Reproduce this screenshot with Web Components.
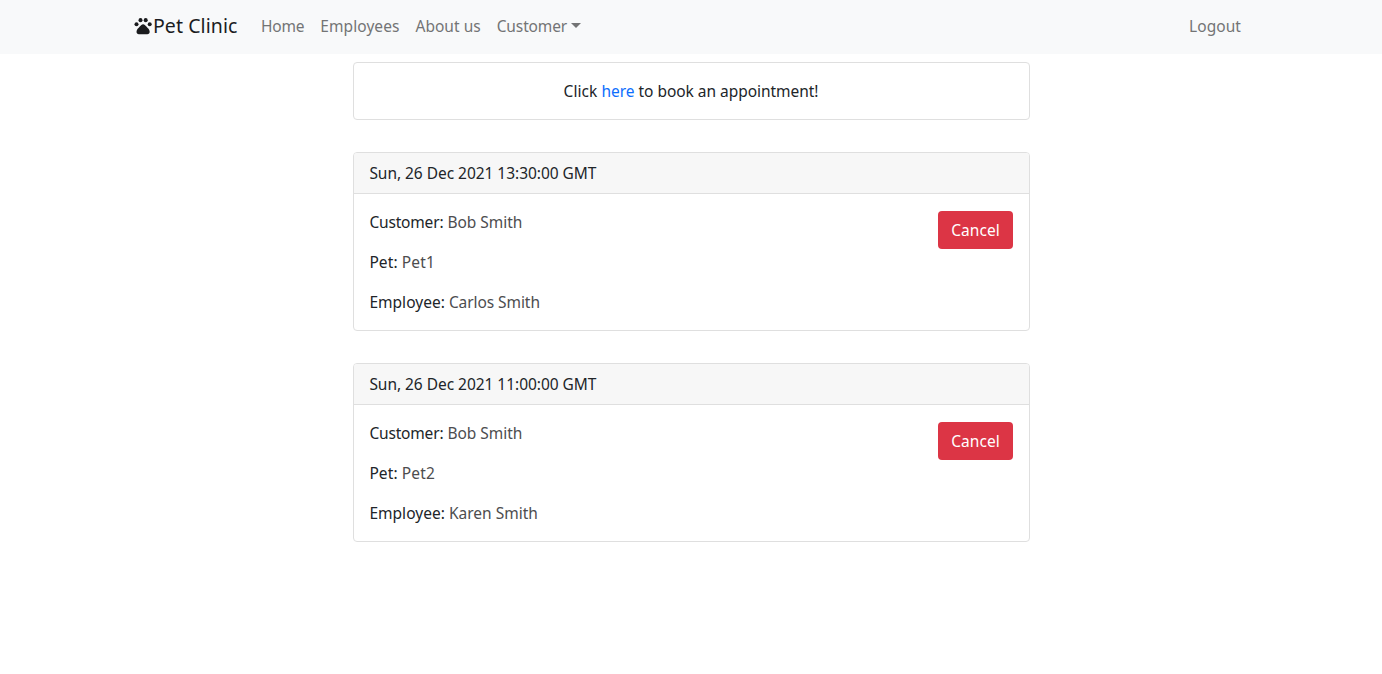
<!DOCTYPE html>
<html lang="en">
<head>
<meta charset="utf-8">
<title>Pet Clinic</title>
<style>
body{margin:0;background:#fff;color:#212529;font:15.5px/24px "Noto Sans","Open Sans",sans-serif}
</style>
</head>
<body>
<clinic-app></clinic-app>
<script>
const define = (name, html, setup) => customElements.define(name, class extends HTMLElement {
  connectedCallback() {
    if (this.shadowRoot) return;
    const t = document.createElement('template');
    t.innerHTML = html;
    this.attachShadow({mode: 'open'}).append(t.content.cloneNode(true));
    if (setup) setup(this, this.shadowRoot);
  }
});

// Text run whose tracking is adjusted to a given advance width.
define('fit-text', `<style>:host{display:inline-block;white-space:pre;vertical-align:baseline}span{display:inline-block}</style><span><slot></slot></span>`, (el, root) => {
  const span = root.querySelector('span');
  const want = parseFloat(el.getAttribute('w'));
  const n = el.textContent.length;
  const have = span.getBoundingClientRect().width;
  span.style.letterSpacing = ((want - have) / n) + 'px';
  el.style.width = want + 'px';
});

define('paw-icon', `<style>:host{display:block;width:20px;height:20px}svg{display:block}</style>
<svg width="20" height="20" viewBox="0 0 20 20" fill="#1b1c1e"><ellipse cx="3.500" cy="8.300" rx="2" ry="2"/><ellipse cx="7.500" cy="4.200" rx="2" ry="2.100"/><ellipse cx="12.700" cy="4.200" rx="2" ry="2.100"/><ellipse cx="16.700" cy="8.300" rx="2" ry="2"/><path d="M10.100 8.200c1.300 0 2.200 1 3.300 2.300 1.300 1.500 3.300 3.100 3.300 5.200 0 1.500-.9 2.500-2.400 2.500H5.900c-1.500 0-2.400-1-2.400-2.500 0-2.100 2-3.700 3.300-5.200C7.900 9.200 8.800 8.200 10.100 8.200z"/></svg>`);

define('nav-link', `<style>:host{display:flex;align-items:center;padding:0 8px;color:#737475}</style><slot></slot>`);

define('nav-caret', `<style>:host{display:block;margin:-1px 0 0 4px;border:5px solid transparent;border-top-color:#737475;border-bottom:0}</style>`);

define('nav-bar', `<style>
:host{display:block;background:#f8f9fa}
nav{box-sizing:border-box;height:54px;max-width:1140px;margin:0 auto;padding:0 12px 2px;display:flex;align-items:center}
.brand{display:flex;align-items:center;font-size:19.500px;line-height:30px;margin-right:15.500px;color:#1b1c1e}
.links{display:flex;flex:1}
</style>
<nav><div class="brand"><paw-icon></paw-icon><fit-text w="84.5">Pet Clinic</fit-text></div>
<div class="links"><nav-link><fit-text w="43.3">Home</fit-text></nav-link><nav-link><fit-text w="79.2">Employees</fit-text></nav-link><nav-link><fit-text w="65.2">About us</fit-text></nav-link><nav-link><fit-text w="70.5">Customer</fit-text><nav-caret></nav-caret></nav-link></div>
<nav-link><fit-text w="52">Logout</fit-text></nav-link></nav>`);

define('ui-card', `<style>:host{display:block;box-sizing:border-box;border:1px solid #dfdfdf;border-radius:4px;background:#fff;overflow:hidden}</style><slot></slot>`);

define('danger-button', `<style>:host{display:block}button{display:block;box-sizing:border-box;width:75px;height:38px;padding:0;border:0;border-radius:4px;background:#dc3545;color:#fff;font:inherit}</style><button><slot></slot></button>`);

define('appointment-card', `<style>
:host{display:block}
header{padding:8px 15.400px;background:#f7f7f7;border-bottom:1px solid #dfdfdf}
.body{display:flex;justify-content:space-between;align-items:flex-start;padding:16px 16px 16px 15.400px}
.rows{display:grid;gap:16px}
.row{display:flex;gap:4px;height:24px}
.muted{color:#4d4d4f}
danger-button{margin-top:1px}
</style>
<ui-card><header></header><div class="body"><div class="rows"></div><danger-button><fit-text w="48.5">Cancel</fit-text></danger-button></div></ui-card>`, (el, root) => {
  root.querySelector('header').innerHTML = `<fit-text w="227">${el.getAttribute('when')}</fit-text>`;
  const rows = [['Customer:', 74, el.getAttribute('customer'), 75], ['Pet:', 28.3, el.getAttribute('pet'), 33.5], ['Employee:', 75.5, el.getAttribute('employee'), el.getAttribute('employee-width')]];
  root.querySelector('.rows').innerHTML = rows.map(([k, kw, v, vw]) => `<div class="row"><fit-text w="${kw}">${k}</fit-text><fit-text class="muted" w="${vw}">${v}</fit-text></div>`).join('');
});

define('booking-card', `<style>
:host{display:block}
p{margin:0;padding:16px 17px 16px 16px;display:flex;justify-content:center;gap:4px}
a{color:#0d6efd;text-decoration:none}
</style>
<ui-card><p><fit-text w="34">Click</fit-text><a href="#"><fit-text w="33">here</fit-text></a><fit-text w="180">to book an appointment!</fit-text></p></ui-card>`);

define('clinic-app', `<style>
:host{display:block}
main{width:677px;margin:8px auto 0;padding-left:1px;display:grid;gap:32px}
</style>
<nav-bar></nav-bar>
<main>
<booking-card></booking-card>
<appointment-card when="Sun, 26 Dec 2021 13:30:00 GMT" customer="Bob Smith" pet="Pet1" employee="Carlos Smith" employee-width="91"></appointment-card>
<appointment-card when="Sun, 26 Dec 2021 11:00:00 GMT" customer="Bob Smith" pet="Pet2" employee="Karen Smith" employee-width="89"></appointment-card>
</main>`);
</script>
</body>
</html>
